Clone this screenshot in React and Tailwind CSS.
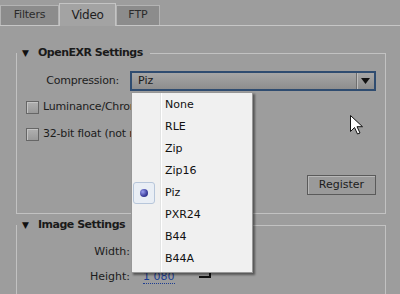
import { useState } from "react";

const font = { fontFamily: '"DejaVu Sans", Verdana, sans-serif' };

const options = ["None", "RLE", "Zip", "Zip16", "Piz", "PXR24", "B44", "B44A"];

function Legend({ children }) {
  return (
    <legend className="pl-[5px] pr-[7px] h-[14px] flex items-center">
      <span className="text-[9px] text-[#111] w-[8px] leading-none">▼</span>
      <span className="ml-[8px] font-bold text-[11px] text-[#1a1a1a] tracking-[-0.5px] leading-[14px]">
        {children}
      </span>
    </legend>
  );
}

// label runs under the open menu, so it is clipped at the menu's left edge
function Check({ label }) {
  return (
    <div className="flex items-center h-[13px] pl-[9px]">
      <div className="w-[13px] h-[13px] border border-[#666] bg-gradient-to-b from-[#b0b0b0] to-[#999] shadow-[inset_1px_1px_0_#c4c4c4]" />
      <span className="ml-[4px] w-[89px] overflow-hidden text-[11px] text-[#1c1c1c] whitespace-nowrap tracking-[-0.2px]">
        {label}
      </span>
    </div>
  );
}

export default function App() {
  const [value, setValue] = useState("Piz");

  return (
    <div className="w-[400px] h-[294px] bg-[#9d9d9d] overflow-hidden relative select-none" style={font}>
      {/* Tabs */}
      <div className="h-[26px] flex items-end border-b border-[#c6c6c6]">
        <div className="w-[59px] h-[20px] bg-[#8c8c8c] border border-b-0 border-[#b4b4b4] flex items-center justify-center text-[11px] text-[#2b2b2b] tracking-[-0.2px]">
          Filters
        </div>
        <div className="w-[57px] h-[23px] -mb-px bg-[#a3a3a3] border border-b-0 border-[#c4c4c4] flex items-center justify-center text-[12px] text-[#1e1e1e] tracking-[-0.3px]">
          Video
        </div>
        <div className="w-[44px] h-[20px] bg-[#8c8c8c] border border-b-0 border-[#b4b4b4] flex items-center justify-center text-[11px] text-[#2b2b2b]">
          FTP
        </div>
      </div>

      {/* OpenEXR Settings */}
      <fieldset className="ml-[16px] mt-[20px] w-[370px] border border-[#c2c2c2] flex flex-col pb-[18px]">
        <Legend>OpenEXR Settings</Legend>
        <div className="flex items-center pt-[11px]">
          <span className="w-[102px] text-right text-[11px] text-[#1c1c1c] tracking-[-0.2px]">Compression:</span>
          <div className="ml-[11px] w-[246px] h-[20px] border-2 border-[#2f4c70] bg-gradient-to-b from-[#a6a6a6] to-[#8e8e8e] flex items-center">
            <span className="flex-1 pl-[6px] text-[11px] text-[#1a1a1a]">{value}</span>
            <div className="w-[18px] h-full border-l border-[#6e6e6e] shadow-[inset_1px_0_0_#bdbdbd] flex items-center justify-center">
              <svg width="9" height="6" viewBox="0 0 9 6"><path d="M0 0h9L4.5 6z" fill="#111" /></svg>
            </div>
          </div>
        </div>
        <div className="mt-[10px]"><Check label="Luminance/Chroma" /></div>
        <div className="mt-[14px]"><Check label="32-bit float (not recommended)" /></div>
        <div className="mt-[34px] self-end mr-[9px] w-[69px] h-[20px] border border-[#5a5a5a] bg-[#9a9a9a] shadow-[inset_1px_1px_0_#b8b8b8] flex items-center justify-center text-[11px] text-[#1c1c1c]">
          Register
        </div>
      </fieldset>

      {/* Image Settings */}
      <fieldset className="ml-[16px] mt-[4px] w-[370px] h-[120px] border border-[#c2c2c2] flex flex-col">
        <Legend>Image Settings</Legend>
        <div className="flex items-center mt-[13px] h-[14px]">
          <span className="w-[113px] text-right text-[11px] text-[#1c1c1c]">Width:</span>
        </div>
        <div className="flex items-center mt-[11px] h-[14px]">
          <span className="w-[113px] text-right text-[11px] text-[#1c1c1c]">Height:</span>
          <span className="ml-[13px] text-[11px] text-[#1d3d92] border-b border-dotted border-[#1d3d92] leading-[12px]">1 080</span>
        </div>
      </fieldset>

      {/* focus corner behind the menu */}
      <div className="absolute left-[199px] top-[264px] w-[12px] h-[14px] border-r-2 border-b-2 border-[#111]" />

      {/* Dropdown menu */}
      <div className="absolute left-[131px] top-[92px] w-[122px] h-[181px] bg-[#f0f0f0] border border-[#979797] shadow-[2px_2px_2px_rgba(0,0,0,0.45)] p-[1px]">
        <div className="absolute left-[28px] top-0 bottom-0 w-px bg-[#e2e3e3] shadow-[1px_0_0_#fff]" />
        {options.map((o) => (
          <div key={o} onClick={() => setValue(o)} className="flex items-center h-[22px] relative">
            <div
              className={`w-[22px] h-[22px] flex items-center justify-center rounded-[3px] ${
                o === value ? "border border-[#b7c6da] bg-[#e9eef5]" : ""
              }`}
            >
              {o === value && (
                <div className="w-[8px] h-[8px] rounded-full bg-[radial-gradient(circle_at_35%_35%,#9a9ff0,#3a3d9c_60%,#23256e)]" />
              )}
            </div>
            <span className="ml-[10px] text-[11px] text-[#111]">{o}</span>
          </div>
        ))}
      </div>

      {/* Mouse cursor */}
      <svg className="absolute left-[350px] top-[115px]" width="13" height="20" viewBox="0 0 13 20">
        <path d="M0.5 0.5v16l4-4 3 6.5 2.5-1-3-6.3h5.5z" fill="#fff" stroke="#111" strokeWidth="1" />
      </svg>
    </div>
  );
}
